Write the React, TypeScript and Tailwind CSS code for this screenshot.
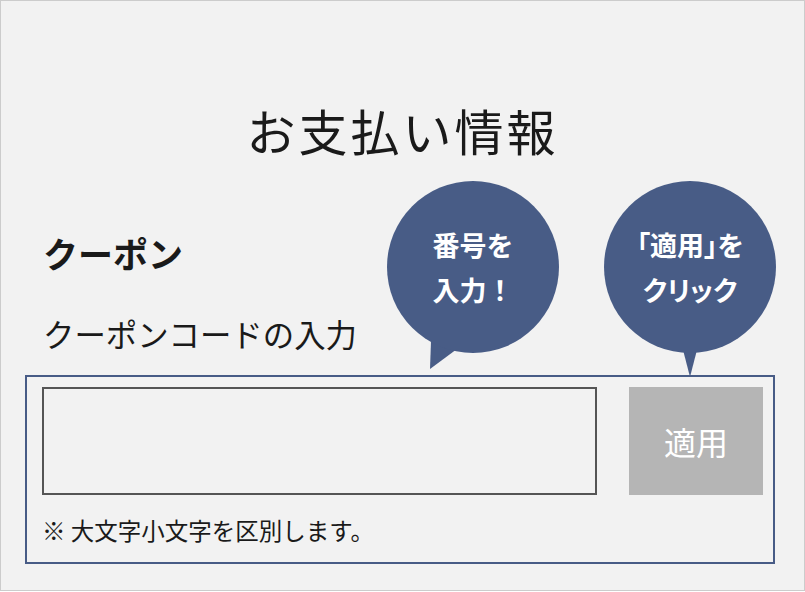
import React from "react";

const jp = { fontFamily: '"Noto Sans CJK JP", "Noto Sans", sans-serif' };

// 吹き出し（円＋しっぽ）
const Bubble = ({
  left,
  lines,
  tail,
  palt,
}: {
  left: number;
  lines: string[];
  tail: string;
  palt?: boolean;
}) => (
  <div className="absolute top-[180px]" style={{ left }}>
    <svg className="absolute left-0 top-0" width="172" height="200" viewBox="0 0 172 200">
      <polygon points={tail} fill="#485c86" />
    </svg>
    <div
      className={
        "relative flex h-[172px] w-[172px] flex-col items-center justify-center rounded-full bg-[#485c86] text-[27px] font-bold leading-[45px] text-white " +
        (palt ? "[font-feature-settings:'palt']" : "")
      }
    >
      {lines.map((l) => (
        <div key={l}>{l}</div>
      ))}
    </div>
  </div>
);

export default function App() {
  return (
    <div
      className="relative h-[591px] w-[805px] overflow-hidden border border-[#cccccc] bg-[#f2f2f2] text-[#1a1a1a]"
      style={jp}
    >
      <h1 className="pt-[93px] text-center text-[49px] font-normal leading-[72px] tracking-[3px]">お支払い情報</h1>

      <div className="px-[24px]">
        <div className="pl-[18px] pt-[67px]">
          <h2 className="text-[35px] font-bold leading-[40px]">クーポン</h2>
          <div className="pt-[41px] text-[31.4px] leading-[40px]">クーポンコードの入力</div>
        </div>

        <div className="mt-[21px] w-[750px] border-2 border-[#485c86] pb-[16px] pl-[15px] pr-[10px] pt-[10px]">
          <div className="flex gap-[32px]">
            <input
              className="h-[108px] w-[555px] border-2 border-[#555555] bg-transparent outline-none"
              type="text"
            />
            <button className="h-[108px] w-[134px] bg-[#b5b5b5] text-[32px] leading-none text-white">適用</button>
          </div>
          <p className="mt-[19px] text-[23.5px] leading-[32px]">※ 大文字小文字を区別します。</p>
        </div>
      </div>

      <Bubble left={386} lines={["番号を", "入力！"]} tail="44,160 70,168 43,188" />
      <Bubble left={603} lines={["「適用」を", "クリック"]} tail="78,165 94,165 86,196" palt />
    </div>
  );
}
